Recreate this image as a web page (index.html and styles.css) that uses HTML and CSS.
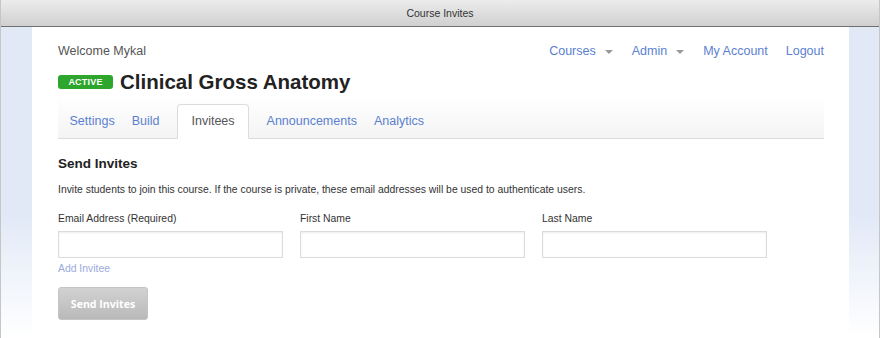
FILE: index.html
```html
<!DOCTYPE html>
<html>
<head>
<meta charset="utf-8">
<link rel="stylesheet" href="styles.css">
</head>
<body>
<div class="window">
  <div class="titlebar">Course Invites</div>
  <div class="frame">
    <div class="side"></div>
    <div class="content">
      <div class="topbar">
        <div class="welcome">Welcome Mykal</div>
        <nav class="usernav">
          <a class="navlink dd">Courses <span class="caret"></span></a>
          <a class="navlink dd">Admin <span class="caret"></span></a>
          <a class="navlink">My Account</a>
          <a class="navlink">Logout</a>
        </nav>
      </div>
      <div class="titlerow">
        <span class="badge">ACTIVE</span>
        <h1 class="course">Clinical Gross Anatomy</h1>
      </div>
      <div class="tabs">
        <a class="tab">Settings</a>
        <a class="tab">Build</a>
        <a class="tab active">Invitees</a>
        <a class="tab">Announcements</a>
        <a class="tab">Analytics</a>
      </div>
      <h2 class="section">Send Invites</h2>
      <p class="desc">Invite students to join this course. If the course is private, these email addresses will be used to authenticate users.</p>
      <div class="fields">
        <div class="field"><label class="label">Email Address (Required)</label><input class="input" type="text"></div>
        <div class="field"><label class="label">First Name</label><input class="input" type="text"></div>
        <div class="field"><label class="label">Last Name</label><input class="input" type="text"></div>
      </div>
      <a class="add">Add Invitee</a>
      <button class="btn">Send Invites</button>
    </div>
    <div class="side right"></div>
  </div>
</div>
</body>
</html>
```
FILE: styles.css
```css
html, body {
  margin: 0;
  padding: 0;
  background: #fff;
}
body {
  font-family: "Liberation Sans", Arial, sans-serif;
  color: #333;
  width: 880px;
  height: 338px;
  overflow: hidden;
}
.window {
  display: flex;
  flex-direction: column;
  height: 338px;
  border-left: 1px solid #c6c6c6;
  border-right: 1px solid #c6c6c6;
  box-sizing: border-box;
}
.titlebar {
  height: 26px;
  line-height: 26px;
  text-align: center;
  font-size: 10.5px;
  color: #333;
  background: linear-gradient(#ececec, #d0d0d0);
  border-bottom: 1px solid #707070;
  flex: none;
}
.frame {
  flex: 1;
  display: flex;
}
.side {
  width: 31px;
  flex: none;
  background: linear-gradient(#e1e9f7 0%, #e1e9f7 60%, #ffffff 100%);
}
.side.right {
  width: 30px;
}
.content {
  flex: 1;
  background: #fff;
  padding: 15px 25px 0 26px;
}
.topbar {
  display: flex;
  justify-content: space-between;
  align-items: center;
  height: 16px;
  font-size: 12.5px;
  line-height: 16px;
  margin-top: 1px;
}
.welcome {
  color: #555;
}
.usernav {
  display: flex;
  gap: 18px;
}
.navlink {
  color: #5b7fcf;
  display: flex;
  align-items: center;
}
.navlink.dd {
  margin-right: 1px;
}
.caret {
  display: inline-block;
  width: 0;
  height: 0;
  border-left: 4px solid transparent;
  border-right: 4px solid transparent;
  border-top: 4px solid #999;
  margin-left: 9px;
  margin-top: 1px;
}
.titlerow {
  display: flex;
  align-items: center;
  height: 26px;
  margin-top: 10px;
}
.badge {
  background: #2ea52d;
  color: #fff;
  font-size: 9px;
  font-weight: bold;
  height: 14px;
  line-height: 14px;
  width: 55px;
  text-align: center;
  border-radius: 3px;
  margin-right: 7px;
  letter-spacing: 0.2px;
}
.course {
  margin: 0;
  font-size: 20.5px;
  font-weight: bold;
  color: #222;
  line-height: 26px;
}
.tabs {
  display: flex;
  align-items: flex-end;
  height: 36px;
  padding-top: 6px;
  padding-left: 3px;
  background: linear-gradient(#ffffff, #f4f4f4);
  border-bottom: 1px solid #dcdcdc;
  margin-top: 1px;
}
.tab {
  font-size: 12.5px;
  color: #5b7fcf;
  height: 35px;
  line-height: 33px;
  padding: 0 7.5px;
  box-sizing: border-box;
  margin-bottom: -1px;
  border: 1px solid transparent;
}
.tab.active {
  background: #fff;
  color: #555;
  border: 1px solid #dcdcdc;
  border-bottom-color: #fff;
  border-radius: 4px 4px 0 0;
  padding: 0 13px;
  margin: 0 9.5px -1px 9.5px;
}
.section {
  margin: 16px 0 0 0;
  font-size: 13.5px;
  font-weight: bold;
  color: #222;
  line-height: 17px;
}
.desc {
  margin: 11px 0 0 0;
  font-size: 10.4px;
  line-height: 14px;
  color: #333;
}
.fields {
  display: flex;
  gap: 17px;
  margin-top: 15px;
}
.field {
  display: flex;
  flex-direction: column;
  width: 225px;
}
.label {
  font-size: 10.4px;
  line-height: 14px;
  color: #333;
  margin-bottom: 5px;
}
.input {
  height: 27px;
  box-sizing: border-box;
  border: 1px solid #dcdcdc;
  box-shadow: inset 0 1px 2px rgba(0,0,0,0.08);
  margin: 0;
  padding: 0 6px;
  font-family: inherit;
}
.add {
  display: block;
  font-size: 10.4px;
  line-height: 14px;
  color: #9aabdc;
  margin-top: 4px;
}
.btn {
  display: block;
  margin-top: 11px;
  width: 90px;
  height: 33px;
  border: 1px solid #c4c4c4;
  border-radius: 3px;
  background: linear-gradient(#d2d2d2, #b9b9b9);
  color: #fff;
  font-family: "Open Sans", "Liberation Sans", sans-serif;
  font-weight: bold;
  font-size: 10.6px;
  padding: 0;
}
```
